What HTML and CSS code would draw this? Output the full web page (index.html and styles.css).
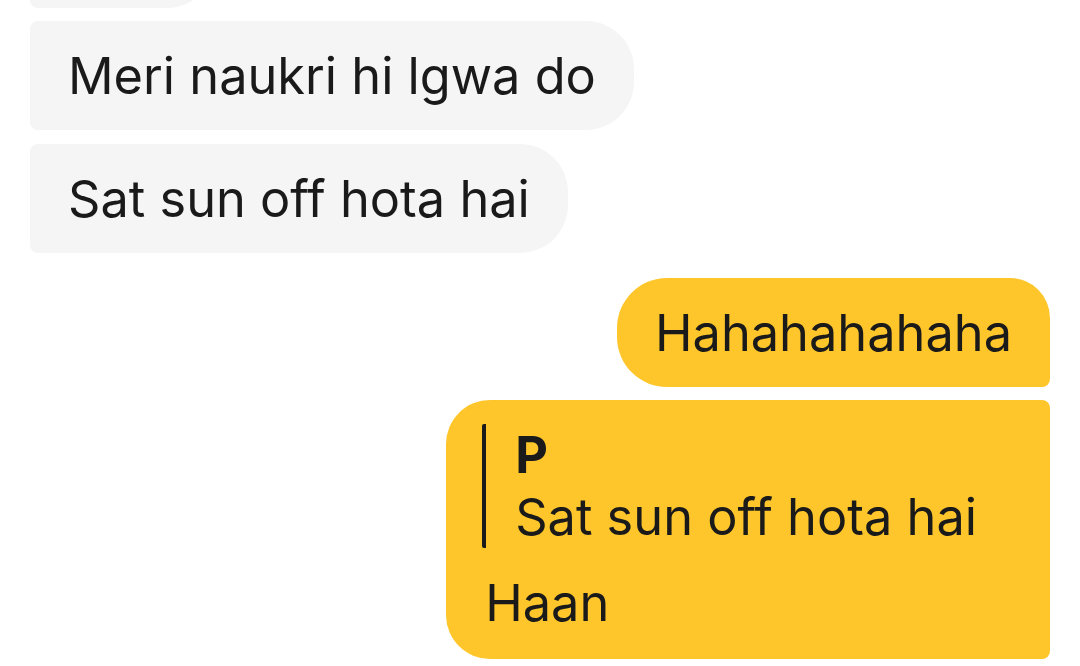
FILE: index.html
```html
<!DOCTYPE html>
<html>
<head>
<meta charset="utf-8">
<link rel="stylesheet" href="styles.css">
</head>
<body>
<div class="chat">
  <div class="msg in cut"></div>
  <div class="msg in">Meri naukri hi lgwa do</div>
  <div class="msg in">Sat sun off hota hai</div>
  <div class="msg out first">Hahahahahaha</div>
  <div class="msg out reply">
    <div class="quote">
      <div class="quote-name">P</div>
      <div class="quote-text">Sat sun off hota hai</div>
    </div>
    <div class="reply-text">Haan</div>
  </div>
</div>
</body>
</html>
```
FILE: styles.css
```css
html, body {
  margin: 0;
  padding: 0;
  background: #ffffff;
}
body {
  width: 1080px;
  height: 666px;
  overflow: hidden;
  font-family: Inter, "Liberation Sans", sans-serif;
  color: #1a1a1a;
}
.chat {
  display: flex;
  flex-direction: column;
  padding: 0 30px;
  margin-top: -101px;
}
.msg {
  font-size: 50.5px;
  line-height: 62px;
  white-space: nowrap;
  box-sizing: border-box;
}
.in {
  align-self: flex-start;
  background: #f5f5f5;
  padding: 24px 38px 23px 38px;
  border-radius: 8px 48px 48px 8px;
  margin-bottom: 14px;
}
.cut {
  width: 185px;
  height: 109px;
  margin-bottom: 13px;
}
.out {
  align-self: flex-end;
  background: #fec62b;
}
.first {
  margin-top: 11px;
  padding: 24px 38px 23px 38px;
  border-radius: 50px 40px 8px 50px;
  margin-bottom: 13px;
}
.reply {
  padding: 24px 73px 25px 36px;
  border-radius: 44px 8px 8px 44px;
}
.quote {
  border-left: 4px solid #1a1a1a;
  border-radius: 2px;
  padding-left: 29px;
}
.quote-name {
  font-weight: 700;
}
.reply-text {
  margin-top: 24px;
  padding-left: 3px;
}
```
